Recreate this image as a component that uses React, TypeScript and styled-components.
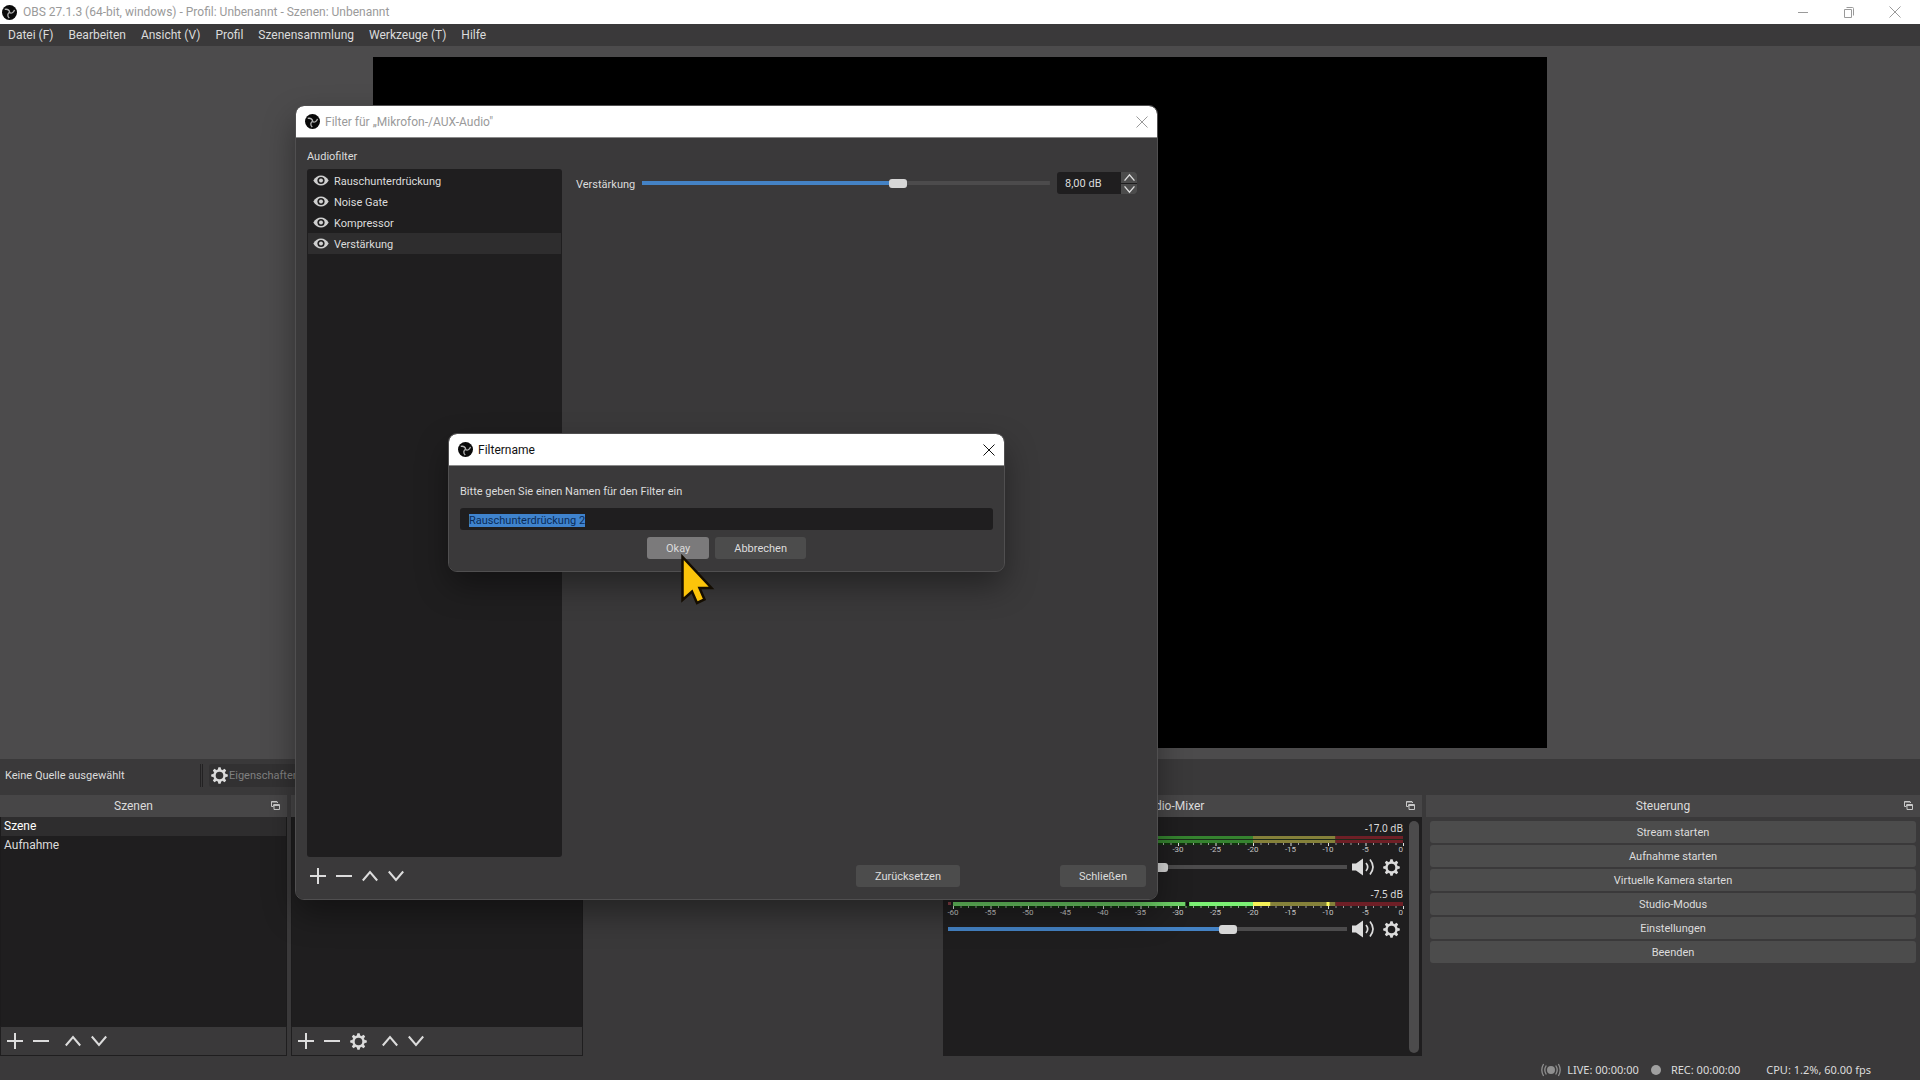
import React, { useEffect, useRef, useState } from 'react';
import styled, { createGlobalStyle } from 'styled-components';

const c = {
  window: '#3a393a',
  dark: '#1f1e1f',
  control: '#4c4c4c',
  text: '#dcdcdc',
  blue: '#4482c4',
};

const font = `'Roboto', 'Open Sans', sans-serif`;
const wideFont = `'Noto Sans', 'Open Sans', sans-serif`;

const GlobalStyle = createGlobalStyle`
  *, *::before, *::after { box-sizing: border-box; }
  body { margin: 0; background: ${c.window}; }
  button, input { font: inherit; color: inherit; }
  button { border: 0; padding: 0; background: none; }
  ul { list-style: none; margin: 0; padding: 0; }
  h1, h2, p { margin: 0; font: inherit; }
`;

const Shell = styled.div`
  position: relative;
  display: flex;
  flex-direction: column;
  min-height: 100vh;
  overflow: hidden;
  background: ${c.window};
  color: ${c.text};
  font: 11px/16px ${font};
`;

const TitleBar = styled.header<{ $tall?: boolean; $active?: boolean }>`
  display: flex;
  flex-shrink: 0;
  align-items: center;
  gap: ${p => (p.$tall ? 5 : 6)}px;
  height: ${p => (p.$tall ? 32 : 24)}px;
  padding: 0 8px 0 ${p => (p.$tall ? 9 : 2)}px;
  border-bottom: ${p => (p.$tall ? '1px solid #8a8a8a' : '0')};
  background: #fff;
  color: ${p => (p.$active ? '#111' : '#9a9a9a')};
  font: 12px/16px ${font};
`;
const Title = styled.h1`flex: 1;`;
const CaptionButtons = styled.div`
  display: flex;
  gap: 31px;
  padding-right: 10px;
`;
const CaptionButton = styled.button`
  display: grid;
  place-items: center;
  width: 15px;
  height: 16px;
`;

const MenuBar = styled.nav`
  display: flex;
  gap: 15px;
  height: 22px;
  padding: 0 8px;
  align-items: center;
  font: 12px/16px ${font};
`;
const MenuItem = styled.button``;

const Preview = styled.main`
  display: flex;
  justify-content: center;
  flex: 1;
  padding: 11px 0;
  background: #4c4b4c;
`;
const Canvas = styled.div`
  width: 61.1%;
  background: #000;
`;

const ContextBar = styled.section`
  display: flex;
  align-items: center;
  height: 36px;
  padding: 0 5px 4px;
`;
const ContextText = styled.p`
  width: 195px;
  padding-top: 2px;
`;
const Divider = styled.span`
  width: 3px;
  height: 23px;
  border: solid #232223;
  border-width: 0 1px;
  margin-right: 6px;
`;
const PropertiesButton = styled.button`
  display: flex;
  align-items: center;
  gap: 1px;
  height: 23px;
  width: 110px;
  padding-left: 2px;
  border-radius: 3px;
  background: #323132;
  color: #808080;
`;

const Docks = styled.section`
  display: grid;
  grid-template-columns: 287fr 292fr 352fr 479fr 494fr;
  column-gap: 4px;
  height: 261px;
`;
const Dock = styled.section`
  display: flex;
  flex-direction: column;
  min-width: 0;
`;
const DockHeader = styled.header`
  display: flex;
  align-items: center;
  height: 22px;
  padding: 0 7px 0 0;
  background: #474647;
  font: 12px/16px ${font};
`;
const DockTitle = styled.h2`
  flex: 1;
  text-align: center;
`;
const DockButton = styled.button`
  width: 13px;
  text-align: right;
`;
const DockBody = styled.div`
  flex: 1;
  border: solid #1c1b1c;
  border-width: 0 1px;
  background: ${c.dark};
`;
const SceneItem = styled.li<{ $selected?: boolean }>`
  height: 19px;
  padding: 1px 3px;
  background: ${p => (p.$selected ? '#2e2d2e' : 'transparent')};
  color: ${p => (p.$selected ? '#fff' : c.text)};
  font: 12px/16px ${font};
`;
const ToolRow = styled.div<{ $framed?: boolean }>`
  display: flex;
  align-items: center;
  gap: 10px;
  height: ${p => (p.$framed ? 30 : 22)}px;
  padding: 0 6px;
  border: ${p => (p.$framed ? `1px solid ${c.dark}` : '0')};
`;
const Tool = styled.button<{ $spaced?: boolean }>`
  display: grid;
  place-items: center;
  width: 16px;
  height: 20px;
  margin-left: ${p => (p.$spaced ? 6 : 0)}px;
`;

const MixerBody = styled.div`
  display: flex;
  flex: 1;
  gap: 6px;
  padding: 4px 3px 3px 5px;
  background: ${c.dark};
`;
const Channels = styled.div`
  flex: 1;
  display: flex;
  flex-direction: column;
  gap: 9px;
`;
const Channel = styled.section`
  display: flex;
  flex-direction: column;
`;
const Level = styled.p`
  text-align: right;
  font: 10px/15px ${wideFont};
`;
const ChannelControls = styled.div`
  display: flex;
  align-items: center;
  gap: 4px;
  height: 22px;
`;
const IconButton = styled.button`
  display: grid;
  place-items: center;
  width: 24px;
  height: 22px;
`;
const MeterSvg = styled.svg`
  display: block;
  margin-left: 5px;
  overflow: visible;
  font: 8px ${font};
  fill: #c4c4c4;
`;
const ScrollBar = styled.div`
  width: 10px;
  border-radius: 5px;
  background: #4c4b4c;
`;

const Controls = styled.div`
  display: flex;
  flex-direction: column;
  gap: 2px;
  padding: 4px;
`;
const Button = styled.button<{ $hot?: boolean }>`
  height: 22px;
  padding: 2px 19px 0;
  border-radius: 3px;
  background: ${p => (p.$hot ? '#7b7a7b' : c.control)};
`;

const StatusBar = styled.footer`
  display: flex;
  align-items: center;
  justify-content: flex-end;
  height: 24px;
  padding: 4px 49px 0 0;
  font: 11px/16px ${wideFont};
`;
const Status = styled.span`
  display: flex;
  align-items: center;
  gap: 10px;
  margin-left: 12px;
  &:first-child { gap: 6px; }
  &:last-child { margin-left: 26px; }
`;

const Range = styled.input<{ $fill: number }>`
  appearance: none;
  flex: 1;
  min-width: 0;
  height: 10px;
  margin: 0;
  border-radius: 2px;
  background: linear-gradient(to right, ${c.blue} ${p => p.$fill}%, #4c4b4c ${p => p.$fill}%) center / 100% 4px no-repeat;
  &::-webkit-slider-thumb {
    appearance: none;
    width: 18px;
    height: 9px;
    border-radius: 3px;
    background: #d6d6d6;
  }
`;

const Window = styled.section`
  position: absolute;
  display: flex;
  flex-direction: column;
  overflow: hidden;
  border-radius: 8px;
  background: ${c.window};
  outline: 1px solid #504f50;
  box-shadow: 0 14px 32px rgba(0, 0, 0, 0.4);
`;
const FilterWindow = styled(Window)`
  left: 296px;
  top: 106px;
  width: 861px;
  height: 793px;
`;
const NameWindow = styled(Window)`
  left: 449px;
  top: 434px;
  width: 555px;
`;
const FilterContent = styled.div`
  display: grid;
  grid-template-columns: 255px 1fr;
  grid-template-rows: 17px 1fr 22px;
  column-gap: 14px;
  flex: 1;
  padding: 11px 11px 12px;
`;
const FilterCaption = styled.h2`grid-column: 1 / -1;`;
const FilterList = styled.ul`
  margin: 3px 0 8px;
  padding: 1px;
  border-radius: 3px;
  background: ${c.dark};
`;
const FilterItem = styled.li<{ $selected?: boolean }>`
  display: flex;
  align-items: center;
  gap: 5px;
  height: 21px;
  padding-left: 5px;
  background: ${p => (p.$selected ? '#2e2d2e' : 'transparent')};
`;
const FilterName = styled.span`padding-top: 2px;`;
const PropertyRow = styled.div`
  display: flex;
  align-items: center;
  height: 22px;
  margin: 6px 9px 0 0;
`;
const PropertyLabel = styled.label`
  margin-right: 7px;
  padding-top: 3px;
`;
const Spin = styled.div`
  display: flex;
  margin-left: 7px;
  width: 80px;
  height: 22px;
  overflow: hidden;
  border-radius: 3px;
  background: ${c.dark};
`;
const SpinInput = styled.input`
  flex: 1;
  min-width: 0;
  padding: 2px 8px 0;
  border: 0;
  background: none;
  outline: 0;
`;
const SpinButtons = styled.div`
  display: grid;
  gap: 1px;
  width: 16px;
`;
const SpinButton = styled.button`
  display: grid;
  place-items: center;
  background: ${c.control};
`;
const FilterTools = styled.div`
  margin-left: -3px;
`;
const FilterActions = styled.div`
  display: flex;
  justify-content: flex-end;
  gap: 100px;
`;

const NameForm = styled.form`
  display: flex;
  flex-direction: column;
  padding: 18px 11px 12px;
`;
const NameInput = styled.input`
  height: 22px;
  margin: 8px 0 7px;
  padding: 2px 9px 0;
  border: 0;
  border-radius: 3px;
  outline: 0;
  background: ${c.dark};
  &::selection { background: #3f83cd; color: #0b2c58; }
`;
const NameActions = styled.div`
  display: flex;
  gap: 6px;
  justify-content: center;
`;
const Pointer = styled.svg`
  position: absolute;
  left: 680px;
  top: 553px;
`;

const Logo = () => (
  <svg width="15" height="15" viewBox="-7.5 -7.5 15 15" aria-hidden="true">
    <circle r="7.5" fill="#0a0a0a" />
    {[0, 120, 240].map(a => (
      <path
        key={a}
        d="M0 0.3C2.2-.6 3.2-2.6 1.7-5.4"
        fill="none"
        stroke="#b4b4b4"
        strokeWidth="1.3"
        transform={`rotate(${a - 75})`}
      />
    ))}
  </svg>
);

const Stroke = ({ d, size = 16, w = 2 }: { d: string; size?: number; w?: number }) => (
  <svg width={size} height={size} viewBox="0 0 16 16" fill="none" stroke="currentColor" strokeWidth={w} aria-hidden="true">
    <path d={d} />
  </svg>
);
const Plus = () => <Stroke d="M8 0v16M0 8h16" />;
const Minus = () => <Stroke d="M0 8h16" />;
const Up = () => <Stroke d="M0.8 12.5L8 4l7.2 8.5" />;
const Down = () => <Stroke d="M0.8 3.5L8 12l7.2-8.5" />;
const Cross = () => <Stroke d="M2.5 2.5l11 11M13.5 2.5l-11 11" w={1} />;

const Gear = () => (
  <svg width="17" height="17" viewBox="-8.5 -8.5 17 17" fill="none" stroke="#dcdcdc" aria-hidden="true">
    <circle r="5" strokeWidth="2.4" />
    {[0, 45, 90, 135, 180, 225, 270, 315].map(a => (
      <path key={a} d="M-1.8-5.6L-1.1-8.3H1.1L1.8-5.6z" fill="#dcdcdc" stroke="none" transform={`rotate(${a})`} />
    ))}
  </svg>
);

const Eye = () => (
  <svg width="16" height="12" viewBox="0 0 16 12" aria-hidden="true">
    <path d="M0.3 5.5C2.4 2 5 .5 8 .5S13.6 2 15.7 5.5C13.6 9 11 10.5 8 10.5S2.4 9 .3 5.5z" fill="#cfcfcf" />
    <circle cx="8" cy="5.5" r="3.6" fill={c.dark} />
    <circle cx="8" cy="5.5" r="2" fill="#cfcfcf" />
  </svg>
);

const Speaker = () => (
  <svg width="22" height="18" viewBox="0 0 22 18" fill="none" stroke="#dcdcdc" strokeWidth="1.7" aria-hidden="true">
    <path d="M0 5.5h4L11 .5v17L4 12.5H0z" fill="#dcdcdc" stroke="none" />
    <path d="M14 5q3.4 4 0 8M18 1.5q6 7.5 0 15" />
  </svg>
);

const PopOut = () => (
  <svg width="9" height="9" viewBox="0 0 9 9" fill="none" stroke="#c8c8c8" aria-hidden="true">
    <path d="M.5 5.5V.5H6M.5 1H6.5V2M.5 5.5H2M2.5 5.5V3.5M3 3.5h5.5v5h-5.5zM3 4.5h5.5" />
  </svg>
);

const LiveIcon = () => (
  <svg width="20" height="14" viewBox="0 0 20 14" fill="none" stroke="#8f8f8f" strokeWidth="1.3" aria-hidden="true">
    <circle cx="10" cy="7" r="4" fill="#8f8f8f" stroke="none" />
    <path d="M5.3 2.5q-3 4.5 0 9M14.7 2.5q3 4.5 0 9M2.6 1q-3.6 6 0 12M17.4 1q3.6 6 0 12" />
  </svg>
);

const pct = (db: number) => `${((db + 60) / 60) * 100}%`;

type Bar = { from: number; to: number; fill: string };
const idle: Bar[] = [
  { from: -60, to: -20, fill: '#35832f' },
  { from: -20, to: -9, fill: '#85813a' },
  { from: -9, to: 0, fill: '#6e1f26' },
];
const live: Bar[] = [
  { from: -60, to: -29, fill: '#6fd468' },
  { from: -29, to: -28.5, fill: '#101010' },
  { from: -28.5, to: -20, fill: '#7bf274' },
  { from: -20, to: -17.7, fill: '#f6f158' },
  { from: -10.2, to: -9.8, fill: '#fbf65c' },
];

function Meter({ active }: { active?: boolean }) {
  const bars = active ? [...idle, ...live] : idle;
  const h = active ? 4 : 7;
  return (
    <MeterSvg width="calc(100% - 5px)" height={active ? 16 : 20} role="img" aria-label="Pegel">
      {active && <rect x="-5" y="0" width="3" height="3" fill="#8a4048" />}
      <rect y={h} width={pct(-20)} height="2" fill="#12300f" />
      {bars.map(b => (
        <rect key={`${b.from}${b.fill}`} x={pct(b.from)} width={`${((b.to - b.from) / 60) * 100}%`} height={h} fill={b.fill} />
      ))}
      {!active && <rect y="3" width="100%" height="1" fill="#1c2a1b" />}
      {Array.from({ length: 61 }, (_, i) => i - 60).map(db => (
        <rect key={db} x={pct(db)} y={h} width="1" height={db % 5 ? 2 : 3} fill={db % 5 ? '#9a9a9a' : '#e0e0e0'} />
      ))}
      {Array.from({ length: 13 }, (_, i) => i * 5 - 60).map(db => (
        <text key={db} x={pct(db)} y={h + 9} textAnchor={db ? 'middle' : 'end'}>{db}</text>
      ))}
    </MeterSvg>
  );
}

function Slider({ id, label, min, max, start }: { id?: string; label?: string; min: number; max: number; start: number }) {
  const [value, setValue] = useState(start);
  return (
    <Range
      id={id}
      aria-label={label}
      type="range"
      min={min}
      max={max}
      value={value}
      $fill={((value - min) / (max - min)) * 100}
      onChange={e => setValue(Number(e.target.value))}
    />
  );
}

function MixerChannel({ level, start, active }: { level: string; start: number; active?: boolean }) {
  return (
    <Channel>
      <Level>{level}</Level>
      <Meter active={active} />
      <ChannelControls>
        <Slider label="Lautstärke" min={0} max={100} start={start} />
        <IconButton aria-label="Stumm"><Speaker /></IconButton>
        <IconButton aria-label="Optionen"><Gear /></IconButton>
      </ChannelControls>
    </Channel>
  );
}

function DockTop({ title }: { title: string }) {
  return (
    <DockHeader>
      <DockTitle>{title}</DockTitle>
      <DockButton aria-label="Abdocken"><PopOut /></DockButton>
    </DockHeader>
  );
}

const menus = ['Datei (F)', 'Bearbeiten', 'Ansicht (V)', 'Profil', 'Szenensammlung', 'Werkzeuge (T)', 'Hilfe'];
const actions = ['Stream starten', 'Aufnahme starten', 'Virtuelle Kamera starten', 'Studio-Modus', 'Einstellungen', 'Beenden'];
const filters = ['Rauschunterdrückung', 'Noise Gate', 'Kompressor', 'Verstärkung'];

function FilterDialog() {
  return (
    <FilterWindow role="dialog" aria-label="Filter">
      <TitleBar $tall>
        <Logo />
        <Title>Filter für „Mikrofon-/AUX-Audio"</Title>
        <CaptionButton aria-label="Schließen"><Cross /></CaptionButton>
      </TitleBar>
      <FilterContent>
        <FilterCaption>Audiofilter</FilterCaption>
        <FilterList>
          {filters.map(f => (
            <FilterItem key={f} $selected={f === 'Verstärkung'}><Eye /><FilterName>{f}</FilterName></FilterItem>
          ))}
        </FilterList>
        <div>
          <PropertyRow>
            <PropertyLabel htmlFor="gain">Verstärkung</PropertyLabel>
            <Slider id="gain" min={-30} max={30} start={8} />
            <Spin>
              <SpinInput aria-label="Verstärkung in dB" defaultValue="8,00 dB" />
              <SpinButtons>
                <SpinButton aria-label="Mehr"><Stroke size={11} d="M0.8 12.5L8 4l7.2 8.5" /></SpinButton>
                <SpinButton aria-label="Weniger"><Stroke size={11} d="M0.8 3.5L8 12l7.2-8.5" /></SpinButton>
              </SpinButtons>
            </Spin>
          </PropertyRow>
        </div>
        <FilterTools>
          <ToolRow>
            <Tool aria-label="Hinzufügen"><Plus /></Tool>
            <Tool aria-label="Entfernen"><Minus /></Tool>
            <Tool aria-label="Nach oben"><Up /></Tool>
            <Tool aria-label="Nach unten"><Down /></Tool>
          </ToolRow>
        </FilterTools>
        <FilterActions>
          <Button>Zurücksetzen</Button>
          <Button>Schließen</Button>
        </FilterActions>
      </FilterContent>
    </FilterWindow>
  );
}

function NameDialog() {
  const input = useRef<HTMLInputElement>(null);
  useEffect(() => {
    input.current?.focus();
    input.current?.select();
  }, []);
  return (
    <NameWindow role="dialog" aria-label="Filtername">
      <TitleBar $tall $active>
        <Logo />
        <Title>Filtername</Title>
        <CaptionButton aria-label="Schließen"><Cross /></CaptionButton>
      </TitleBar>
      <NameForm onSubmit={e => e.preventDefault()}>
        <label htmlFor="name">Bitte geben Sie einen Namen für den Filter ein</label>
        <NameInput id="name" ref={input} defaultValue="Rauschunterdrückung 2" spellCheck={false} />
        <NameActions>
          <Button $hot>Okay</Button>
          <Button type="button">Abbrechen</Button>
        </NameActions>
      </NameForm>
    </NameWindow>
  );
}

export default function App() {
  return (
    <Shell>
      <GlobalStyle />
      <TitleBar>
        <Logo />
        <Title>OBS 27.1.3 (64-bit, windows) - Profil: Unbenannt - Szenen: Unbenannt</Title>
        <CaptionButtons>
          <CaptionButton aria-label="Minimieren"><Stroke d="M3 8.5h10" w={1} /></CaptionButton>
          <CaptionButton aria-label="Verkleinern">
            <Stroke d="M3.5 5.5h7v8h-7zM5.5 3.5h6q1 0 1 1v7" w={1} />
          </CaptionButton>
          <CaptionButton aria-label="Beenden"><Cross /></CaptionButton>
        </CaptionButtons>
      </TitleBar>
      <MenuBar>{menus.map(m => <MenuItem key={m}>{m}</MenuItem>)}</MenuBar>
      <Preview><Canvas /></Preview>
      <ContextBar>
        <ContextText>Keine Quelle ausgewählt</ContextText>
        <Divider />
        <PropertiesButton><Gear /><FilterName>Eigenschaften</FilterName></PropertiesButton>
      </ContextBar>
      <Docks>
        <Dock>
          <DockTop title="Szenen" />
          <DockBody>
            <ul>
              <SceneItem $selected>Szene</SceneItem>
              <SceneItem>Aufnahme</SceneItem>
            </ul>
          </DockBody>
          <ToolRow $framed>
            <Tool aria-label="Hinzufügen"><Plus /></Tool>
            <Tool aria-label="Entfernen"><Minus /></Tool>
            <Tool aria-label="Nach oben" $spaced><Up /></Tool>
            <Tool aria-label="Nach unten"><Down /></Tool>
          </ToolRow>
        </Dock>
        <Dock>
          <DockTop title="Quellen" />
          <DockBody />
          <ToolRow $framed>
            <Tool aria-label="Hinzufügen"><Plus /></Tool>
            <Tool aria-label="Entfernen"><Minus /></Tool>
            <Tool aria-label="Eigenschaften"><Gear /></Tool>
            <Tool aria-label="Nach oben" $spaced><Up /></Tool>
            <Tool aria-label="Nach unten"><Down /></Tool>
          </ToolRow>
        </Dock>
        <Dock />
        <Dock>
          <DockTop title="Audio-Mixer" />
          <MixerBody>
            <Channels>
              <MixerChannel level="-17.0 dB" start={53} />
              <MixerChannel level="-7.5 dB" start={71} active />
            </Channels>
            <ScrollBar />
          </MixerBody>
        </Dock>
        <Dock>
          <DockTop title="Steuerung" />
          <Controls>{actions.map(a => <Button key={a}>{a}</Button>)}</Controls>
        </Dock>
      </Docks>
      <StatusBar>
        <Status><LiveIcon />LIVE: 00:00:00</Status>
        <Status>
          <svg width="10" height="10" aria-hidden="true"><circle cx="5" cy="5" r="5" fill="#a0a0a0" /></svg>
          REC: 00:00:00
        </Status>
        <Status>CPU: 1.2%, 60.00 fps</Status>
      </StatusBar>
      <FilterDialog />
      <NameDialog />
      <Pointer width="36" height="54" viewBox="0 0 36 54" aria-hidden="true">
        <path d="M2.5 4v43l9.5-8.5 5 11.5 7.5-3.5-5-11.5h12z" fill="#fcc40a" stroke="#140d02" strokeWidth="2.5" />
      </Pointer>
    </Shell>
  );
}
